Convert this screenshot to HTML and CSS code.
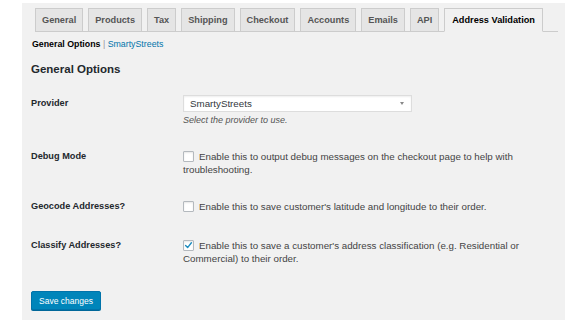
FILE: index.html
```html
<!DOCTYPE html>
<html>
<head>
<meta charset="utf-8">
<link rel="stylesheet" href="styles.css">
</head>
<body>
<div class="wrap">
  <div class="panel">
    <nav class="tabs">
      <span class="tab">General</span>
      <span class="tab">Products</span>
      <span class="tab">Tax</span>
      <span class="tab">Shipping</span>
      <span class="tab">Checkout</span>
      <span class="tab">Accounts</span>
      <span class="tab">Emails</span>
      <span class="tab">API</span>
      <span class="tab active">Address Validation</span>
    </nav>
    <div class="subnav"><span class="current">General Options</span> <span class="sep">|</span> <a class="sublink">SmartyStreets</a></div>
    <h2 class="heading">General Options</h2>
    <div class="form">
      <div class="row">
        <div class="label tall">Provider</div>
        <div class="field">
          <div class="select"><span>SmartyStreets</span><span class="arrow"></span></div>
          <p class="desc">Select the provider to use.</p>
        </div>
      </div>
      <div class="row">
        <div class="label">Debug Mode</div>
        <div class="field text"><span class="cb"></span>Enable this to output debug messages on the checkout page to help with troubleshooting.</div>
      </div>
      <div class="row">
        <div class="label">Geocode Addresses?</div>
        <div class="field text"><span class="cb"></span>Enable this to save customer's latitude and longitude to their order.</div>
      </div>
      <div class="row last">
        <div class="label">Classify Addresses?</div>
        <div class="field text"><span class="cb checked"><svg viewBox="0 0 11 11" width="11" height="11"><path d="M2.6 5.6 L4.6 7.6 L8.4 2.8" fill="none" stroke="#1e8cbe" stroke-width="1.4" stroke-linecap="round" stroke-linejoin="round"/></svg></span>Enable this to save a customer's address classification (e.g. Residential or Commercial) to their order.</div>
      </div>
    </div>
    <button class="btn">Save changes</button>
  </div>
</div>
</body>
</html>
```
FILE: styles.css
```css
* { box-sizing: border-box; }
html, body { margin: 0; padding: 0; background: #fff; }
body {
  font-family: "Liberation Sans", Arial, sans-serif;
  font-size: 9.75px;
  color: #444;
}
.wrap { padding: 3px 0 0 22px; }
.panel {
  width: 543px;
  height: 317px;
  background: #f1f1f1;
  padding-left: 9px;
  padding-top: 5px;
}
.tabs {
  display: flex;
  align-items: flex-end;
  margin: 0 7px 0 4px;
  height: 24px;
  border-bottom: 1px solid #ccc;
}
.tab {
  height: 24px;
  line-height: 22px;
  padding: 0 6px;
  margin-right: 5px;
  margin-bottom: -1px;
  border: 1px solid #ccc;
  background: #e5e5e5;
  color: #555;
  font-weight: bold;
  font-size: 9.2px;
  white-space: nowrap;
}
.tab.active {
  background: #f1f1f1;
  color: #000;
  border-bottom-color: #f1f1f1;
  padding: 0 7px;
}
.subnav {
  margin-top: 6px;
  padding-left: 1px;
  font-size: 8.8px;
  line-height: 12px;
  color: #666;
}
.subnav .current { color: #000; font-weight: bold; }
.subnav .sep { color: #999; }
.sublink { color: #0073aa; }
.heading {
  margin: 11px 0 0;
  font-size: 11.5px;
  line-height: 16px;
  color: #23282d;
  font-weight: bold;
}
.form {
  margin-top: 18px;
  display: flex;
  flex-direction: column;
  gap: 24px;
}
.row {
  display: grid;
  grid-template-columns: 152px 1fr;
}
.row.last { margin-top: 2px; }
.label {
  font-weight: bold;
  font-size: 9.2px;
  color: #23282d;
  line-height: 13px;
}
.label.tall { line-height: 17px; }
.field.text {
  line-height: 13px;
  width: 340px;
  color: #444;
}
.select {
  width: 229px;
  height: 17px;
  background: #fff;
  border: 1px solid #ddd;
  box-shadow: inset 0 1px 2px rgba(0,0,0,0.07);
  display: flex;
  align-items: center;
  justify-content: space-between;
  padding: 0 7px 0 6px;
  color: #32373c;
}
.arrow {
  width: 0;
  height: 0;
  border-left: 2.5px solid transparent;
  border-right: 2.5px solid transparent;
  border-top: 3px solid #888;
}
.desc {
  margin: 2px 0 0;
  font-style: italic;
  font-size: 9px;
  line-height: 12px;
  color: #555;
}
.cb {
  display: inline-block;
  width: 11px;
  height: 11px;
  vertical-align: -2px;
  margin-right: 5px;
  background: #fff;
  border: 1px solid #b4b9be;
  border-radius: 1px;
  box-shadow: inset 0 1px 2px rgba(0,0,0,0.1);
  position: relative;
}
.cb svg { position: absolute; left: -1px; top: -1px; }
.btn {
  margin-top: 26px;
  width: 70px;
  height: 19px;
  padding: 0;
  background: #0085ba;
  border: 1px solid #0073aa;
  border-radius: 2px;
  box-shadow: 0 1px 0 #006799;
  color: #fff;
  font-family: "Liberation Sans", Arial, sans-serif;
  font-size: 8.5px;
  display: block;
}
```
